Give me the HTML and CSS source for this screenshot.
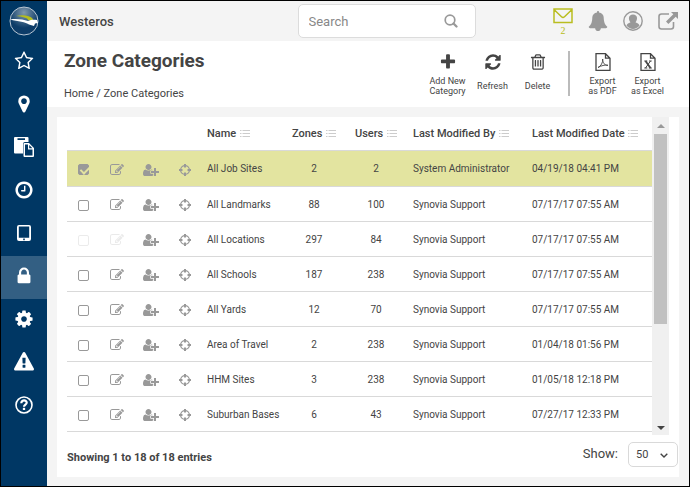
FILE: index.html
```html
<!DOCTYPE html>
<html lang="en">

<head>
  <meta charset="UTF-8" />
  <meta name="viewport" content="width=device-width, initial-scale=1" />
  <title>Zone Categories</title>
  <link rel="stylesheet" href="styles.css">
</head>

<body>
  <svg class="sprite" aria-hidden="true">
    <symbol id="i-star" viewBox="0 0 1792 1792"><path d="M1201 1004l306-297-422-62-189-382-189 382-422 62 306 297-73 421 378-199 377 199zm527-357q0 22-26 48l-363 354 86 500q1 7 1 20 0 50-41 50-19 0-40-12l-449-236-449 236q-22 12-40 12-21 0-31.500-14.500t-10.500-35.500q0-6 2-20l86-500-364-354q-25-27-25-48 0-37 56-46l502-73 225-455q19-41 49-41t49 41l225 455 502 73q56 9 56 46z"/></symbol>
    <symbol id="i-pin" viewBox="0 0 1792 1792"><path d="M1152 640q0-106-75-181t-181-75-181 75-75 181 75 181 181 75 181-75 75-181zm256 0q0 109-33 179l-364 774q-16 33-47.500 52t-67.500 19-67.500-19-46.500-52l-365-774q-33-70-33-179 0-212 150-362t362-150 362 150 150 362z"/></symbol>
    <symbol id="i-paste" viewBox="0 0 20 20"><path fill-rule="evenodd" d="M1 0h12.500q1 0 1 1v4h-3.500q-2 0-2 2v9.500h-8q-1 0-1-1v-14.500q0-1 1-1zM3.500 1.300v1.700h7.500v-1.700z"/><path fill-rule="evenodd" d="M10.500 6h4.500l5 5v8q0 1-1 1h-8.500q-1 0-1-1v-12q0-1 1-1zM11 7.500v11h7.500v-6h-4.500v-5zM15.200 8v3.200h3.200z"/></symbol>
    <symbol id="i-clock" viewBox="0 0 1792 1792"><path d="M1024 544v448q0 14-9 23t-23 9h-320q-14 0-23-9t-9-23v-64q0-14 9-23t23-9h224v-352q0-14 9-23t23-9h64q14 0 23 9t9 23zm416 352q0-148-73-273t-198-198-273-73-273 73-198 198-73 273 73 273 198 198 273 73 273-73 198-198 73-273zm224 0q0 209-103 385.500t-279.500 279.500-385.500 103-385.500-103-279.500-279.500-103-385.500 103-385.500 279.500-279.500 385.500-103 385.500 103 279.500 279.500 103 385.500z"/></symbol>
    <symbol id="i-tablet" viewBox="0 0 20 20"><path fill-rule="evenodd" d="M5 2h10q2 0 2 2v12q0 2-2 2h-10q-2 0-2-2v-12q0-2 2-2zM4.800 3.500v11.200h10.400v-11.200zM10 15.500a.9.9 0 1 0 .01 0z"/></symbol>
    <symbol id="i-lock" viewBox="0 0 1792 1792"><path d="M640 768h512v-192q0-106-75-181t-181-75-181 75-75 181v192zm832 96v576q0 40-28 68t-68 28h-960q-40 0-68-28t-28-68v-576q0-40 28-68t68-28h32v-192q0-184 132-316t316-132 316 132 132 316v192h32q40 0 68 28t28 68z"/></symbol>
    <symbol id="i-gear" viewBox="0 0 1792 1792"><path d="M1152 896q0-106-75-181t-181-75-181 75-75 181 75 181 181 75 181-75 75-181zm512-109v222q0 12-8 23t-20 13l-185 28q-19 54-39 91 35 50 107 138 10 12 10 25t-9 23q-27 37-99 108t-94 71q-12 0-26-9l-138-108q-44 23-91 38-16 136-29 186-7 28-36 28h-222q-14 0-24.500-8.500t-11.500-21.500l-28-184q-49-16-90-37l-141 107q-10 9-25 9-14 0-25-11-126-114-165-168-7-10-7-23 0-12 8-23 15-21 51-66.500t54-70.500q-27-50-41-99l-183-27q-13-2-21-12.500t-8-23.500v-222q0-12 8-23t19-13l186-28q14-46 39-92-40-57-107-138-10-12-10-24 0-10 9-23 26-36 98.500-107.500t94.500-71.500q13 0 26 10l138 107q44-23 91-38 16-136 29-186 7-28 36-28h222q14 0 24.500 8.500t11.500 21.500l28 184q49 16 90 37l142-107q9-9 24-9 13 0 25 10 129 119 165 170 7 8 7 22 0 12-8 23-15 21-51 66.500t-54 70.500q26 50 41 98l183 28q13 2 21 12.500t8 23.500z"/></symbol>
    <symbol id="i-warning" viewBox="0 0 1792 1792"><path d="M1024 1375v-190q0-14-9.500-23.500t-22.500-9.500h-192q-13 0-22.500 9.500t-9.500 23.500v190q0 14 9.500 23.500t22.500 9.500h192q13 0 22.500-9.500t9.500-23.500zm-2-374l18-459q0-12-10-19-13-11-24-11h-220q-11 0-24 11-10 7-10 21l17 457q0 10 10 16.500t24 6.500h185q14 0 23.500-6.500t10.500-16.500zm-14-934l768 1408q35 63-2 126-17 29-46.500 46t-63.500 17h-1536q-34 0-63.500-17t-46.500-46q-37-63-2-126l768-1408q17-31 47-49t65-18 65 18 47 49z"/></symbol>
    <symbol id="i-help" viewBox="0 0 20 20"><g fill="none" stroke="currentColor"><circle cx="10" cy="10" r="8" stroke-width="1.600"/><path d="M7.300 8.200c0-3.800 5.600-3.400 5.400-.4-.1 1.800-2.700 1.900-2.700 4" stroke-width="2.200"/><path d="M10 12.800v2.200" stroke-width="2.300"/></g></symbol>
    <symbol id="i-search" viewBox="0 0 14 14"><g fill="none" stroke="currentColor"><circle cx="6" cy="6" r="4.800" stroke-width="1.700"/><path d="M9.500 9.500l3 3" stroke-width="2.300" stroke-linecap="round"/></g></symbol>
    <symbol id="i-mail" viewBox="0 0 20 16"><path d="M1 1h18v13.500h-18zM1 1.500l7.500 7.200q1.500 1.300 3 0l7.500-7.200" fill="none" stroke="currentColor" stroke-width="1.500"/></symbol>
    <symbol id="i-bell" viewBox="0 0 1792 1792"><path d="M1728 1408q0 52-38 90t-90 38h-448q0 106-75 181t-181 75-181-75-75-181h-448q-52 0-90-38t-38-90q50-42 91-88t85-119.500 74.500-158.500 50-206 19.500-260q0-152 117-282.500t307-158.500q-8-19-8-39 0-40 28-68t68-28 68 28 28 68q0 20-8 39 190 28 307 158.500t117 282.500q0 139 19.500 260t50 206 74.500 158.500 85 119.500 91 88z"/></symbol>
    <symbol id="i-user" viewBox="0 0 20 20"><circle cx="10" cy="10" r="9.200" fill="none" stroke="currentColor" stroke-width="1.400"/><path d="M10 3.500c5 0 4.800 5.500 2.500 7.800 1 .7 3 .7 4 3.200-3.500 4.600-9.500 4.600-13 0 1-2.500 3-2.500 4-3.200-2.300-2.300-2.500-7.800 2.500-7.800z"/></symbol>
    <symbol id="i-share" viewBox="0 0 20 18"><path d="M11 2h-7.500q-2.500 0-2.500 2.500v10q0 2.500 2.500 2.500h9.500q2.500 0 2.500-2.500v-4.500" fill="none" stroke="currentColor" stroke-width="1.600"/><path d="M13 0h7v7l-2.300-2.300-7.300 7.300-2.400-2.400 7.300-7.300z"/></symbol>
    <symbol id="i-plus" viewBox="0 0 1792 1792"><path d="M1600 736v192q0 40-28 68t-68 28h-416v416q0 40-28 68t-68 28h-192q-40 0-68-28t-28-68v-416h-416q-40 0-68-28t-28-68v-192q0-40 28-68t68-28h416v-416q0-40 28-68t68-28h192q40 0 68 28t28 68v416h416q40 0 68 28t28 68z"/></symbol>
    <symbol id="i-refresh" viewBox="0 0 1792 1792"><path d="M1639 1056q0 5-1 7-64 268-268 434.500t-478 166.500q-146 0-282.500-55t-243.500-157l-129 129q-19 19-45 19t-45-19-19-45v-448q0-26 19-45t45-19h448q26 0 45 19t19 45-19 45l-137 137q71 66 161 102t187 36q134 0 250-65t186-179q11-17 53-117 8-23 30-23h192q13 0 22.500 9.500t9.500 22.500zm25-800v448q0 26-19 45t-45 19h-448q-26 0-45-19t-19-45 19-45l138-138q-148-137-349-137-134 0-250 65t-186 179q-11 17-53 117-8 23-30 23h-199q-13 0-22.500-9.500t-9.500-22.500v-7q65-268 270-434.500t480-166.500q146 0 284 55.500t245 156.500l130-129q19-19 45-19t45 19 19 45z"/></symbol>
    <symbol id="i-trash" viewBox="0 0 1792 1792"><path d="M704 736v576q0 14-9 23t-23 9h-64q-14 0-23-9t-9-23v-576q0-14 9-23t23-9h64q14 0 23 9t9 23zm256 0v576q0 14-9 23t-23 9h-64q-14 0-23-9t-9-23v-576q0-14 9-23t23-9h64q14 0 23 9t9 23zm256 0v576q0 14-9 23t-23 9h-64q-14 0-23-9t-9-23v-576q0-14 9-23t23-9h64q14 0 23 9t9 23zm128 724v-948h-896v948q0 22 7 40.500t14.500 27 10.500 8.500h832q3 0 10.500-8.500t14.500-27 7-40.500zm-672-1076h448l-48-117q-7-9-17-11h-317q-10 2-17 11zm928 32v64q0 14-9 23t-23 9h-96v948q0 83-47 143.500t-113 60.500h-832q-66 0-113-58.500t-47-141.500v-952h-96q-14 0-23-9t-9-23v-64q0-14 9-23t23-9h309l70-167q15-37 54-63t79-26h320q40 0 79 26t54 63l70 167h309q14 0 23 9t9 23z"/></symbol>
    <symbol id="i-pdf" viewBox="0 0 16 18"><g fill="none" stroke="currentColor"><path d="M1 .7h9.500l4.500 4.500v12.100h-14zM10.500 .7v4.500h4.500" stroke-width="1.300"/><path d="M3 14.500c3-1.300 5-5 4.700-8.500 0 4 2 6.500 5.300 6.300-3-.8-7 .5-10 2.200z" stroke-width=".9"/></g></symbol>
    <symbol id="i-excel" viewBox="0 0 16 18"><g fill="none" stroke="currentColor"><path d="M1 .7h9.500l4.500 4.500v12.100h-14zM10.500 .7v4.500h4.500" stroke-width="1.300"/><path d="M5.500 8l5 7" stroke-width="1.800"/><path d="M10.500 8l-5 7M4.300 8h3M9 8h2.700M4.300 15h3M8.800 15h3" stroke-width="1"/></g></symbol>
    <symbol id="i-list" viewBox="0 0 10 8"><path d="M0 1.500h1.500M0 4.500h1.500M0 7.500h1.500M2.500 1.500h7.500M2.500 4.500h7.500M2.500 7.500h7.500" fill="none" stroke="currentColor"/></symbol>
    <symbol id="i-edit" viewBox="0 0 1792 1792"><path d="M888 1184l116-116-152-152-116 116v56h96v96h56zm440-720q-16-16-33 1l-350 350q-17 17-1 33t33-1l350-350q17-17 1-33zm80 594v190q0 119-84.500 203.500t-203.500 84.500h-832q-119 0-203.500-84.500t-84.500-203.500v-832q0-119 84.500-203.500t203.500-84.500h832q63 0 117 25 15 7 18 23 3 17-9 29l-49 49q-14 14-32 8-23-6-45-6h-832q-66 0-113 47t-47 113v832q0 66 47 113t113 47h832q66 0 113-47t47-113v-126q0-13 9-22l64-64q15-15 35-7t20 29zm-96-738l288 288-672 672h-288v-288zm444 132l-92 92-288-288 92-92q28-28 68-28t68 28l152 152q28 28 28 68t-28 68z"/></symbol>
    <symbol id="i-user-plus" viewBox="0 0 2048 1792"><path d="M704 896q-159 0-271.500-112.500t-112.500-271.500 112.500-271.500 271.500-112.500 271.500 112.500 112.500 271.500-112.500 271.500-271.500 112.500zm960 128h352q13 0 22.500 9.500t9.500 22.500v192q0 13-9.500 22.500t-22.500 9.500h-352v352q0 13-9.500 22.500t-22.500 9.500h-192q-13 0-22.500-9.500t-9.500-22.500v-352h-352q-13 0-22.500-9.500t-9.500-22.500v-192q0-13 9.500-22.500t22.500-9.500h352v-352q0-13 9.500-22.500t22.500-9.500h192q13 0 22.500 9.500t9.500 22.500v352zm-736 224q0 52 38 90t90 38h256v238q-68 50-171 50h-874q-121 0-194-69t-73-190q0-53 3.500-103.500t14-109 26.500-108.500 43-97.500 62-81 85.500-53.500 111.500-20q19 0 39 17 79 61 154.500 91.500t164.500 30.500 164.500-30.500 154.500-91.500q20-17 39-17 132 0 217 96h-223q-52 0-90 38t-38 90v192z"/></symbol>
    <symbol id="i-target" viewBox="0 0 14 14"><g fill="none" stroke="currentColor"><circle cx="7" cy="7" r="4.400" stroke-width="1.300"/><path d="M7 1v3.500M7 9.500v3.500M1 7h3.500M9.500 7h3.500" stroke-width="2"/></g></symbol>
    <symbol id="i-chevron" viewBox="0 0 8 5"><path d="M.7 .7l3.300 3.300 3.300-3.300" fill="none" stroke="currentColor" stroke-width="1.400"/></symbol>
  </svg>

  <div class="app">
    <nav class="sidebar">
      <a class="logo" href="#" aria-label="Dashboard">
        <svg viewBox="0 0 30 30">
          <defs>
            <radialGradient id="globe" cx=".5" cy=".2" r=".55">
              <stop offset="0" stop-color="#8199ae" />
              <stop offset="1" stop-color="#0d3c68" />
            </radialGradient>
          </defs>
          <circle cx="15" cy="15" r="14" fill="url(#globe)" stroke="#b9c6d3" />
          <path d="M7 10c7-1.500 14-.5 17 3l-1 2-4-1c0-2-6-3.500-12-4z" fill="#b5bd1e" />
          <path d="M1 13.500c7-1 13 0 18 1.500 3-1.500 6-1.500 9-1l1 3-3 .5-1 2.500-5-1.500c-3-2.500-11-3-19-5z" fill="#fff" />
        </svg>
      </a>
      <a class="nav-item" href="#" aria-label="Favorites"><svg><use href="#i-star" /></svg></a>
      <a class="nav-item" href="#" aria-label="Map"><svg><use href="#i-pin" /></svg></a>
      <a class="nav-item" href="#" aria-label="Reports"><svg><use href="#i-paste" /></svg></a>
      <a class="nav-item" href="#" aria-label="Time"><svg><use href="#i-clock" /></svg></a>
      <a class="nav-item" href="#" aria-label="Devices"><svg><use href="#i-tablet" /></svg></a>
      <a class="nav-item active" href="#" aria-label="Admin"><svg><use href="#i-lock" /></svg></a>
      <a class="nav-item" href="#" aria-label="Settings"><svg><use href="#i-gear" /></svg></a>
      <a class="nav-item" href="#" aria-label="Alerts"><svg><use href="#i-warning" /></svg></a>
      <a class="nav-item" href="#" aria-label="Help"><svg><use href="#i-help" /></svg></a>
    </nav>

    <div class="main">
      <header class="topbar">
        <span class="company">Westeros</span>
        <div class="search">
          <input type="text" placeholder="Search" aria-label="Search" />
          <svg><use href="#i-search" /></svg>
        </div>
        <div class="top-icons">
          <a class="mail" href="#" aria-label="Messages"><svg><use href="#i-mail" /></svg><span>2</span></a>
          <a href="#" aria-label="Notifications"><svg><use href="#i-bell" /></svg></a>
          <a href="#" aria-label="Account"><svg><use href="#i-user" /></svg></a>
          <a href="#" aria-label="Log out"><svg><use href="#i-share" /></svg></a>
        </div>
      </header>

      <div class="page-head">
        <div>
          <h1>Zone Categories</h1>
          <div class="breadcrumb"><a href="#">Home</a> / <a href="#">Zone Categories</a></div>
        </div>
        <div class="toolbar">
          <button type="button"><svg><use href="#i-plus" /></svg><span>Add New<br>Category</span></button>
          <button type="button"><svg><use href="#i-refresh" /></svg><span>Refresh</span></button>
          <button type="button"><svg><use href="#i-trash" /></svg><span>Delete</span></button>
          <div class="divider"></div>
          <button type="button"><svg><use href="#i-pdf" /></svg><span>Export<br>as PDF</span></button>
          <button type="button"><svg><use href="#i-excel" /></svg><span>Export<br>as Excel</span></button>
        </div>
      </div>

      <div class="panel">
        <div class="grid-wrap">
          <table>
            <colgroup>
              <col class="c-check"><col class="c-edit"><col class="c-user"><col class="c-target">
              <col class="c-name"><col class="c-zones"><col class="c-users"><col class="c-by"><col>
            </colgroup>
            <thead>
              <tr>
                <th></th><th></th><th></th><th></th>
                <th>Name <svg><use href="#i-list" /></svg></th>
                <th class="num">Zones <svg><use href="#i-list" /></svg></th>
                <th class="num">Users <svg><use href="#i-list" /></svg></th>
                <th>Last Modified By <svg><use href="#i-list" /></svg></th>
                <th>Last Modified Date <svg><use href="#i-list" /></svg></th>
              </tr>
            </thead>
            <tbody id="rows"></tbody>
          </table>
          <div class="scrollbar"><i class="up"></i><div class="thumb"></div><i class="down"></i></div>
        </div>
        <div class="panel-foot">
          <strong>Showing 1 to 18 of 18 entries</strong>
          <div class="page-size">
            <label for="pageSize">Show:</label>
            <div class="select">
              <select id="pageSize">
                <option>50</option>
                <option>100</option>
              </select>
              <svg><use href="#i-chevron" /></svg>
            </div>
          </div>
        </div>
      </div>
    </div>
  </div>

  <script>
    const rows = [
      ['All Job Sites', 2, 2, 'System Administrator', '04/19/18 04:41 PM', 'selected'],
      ['All Landmarks', 88, 100, 'Synovia Support', '07/17/17 07:55 AM'],
      ['All Locations', 297, 84, 'Synovia Support', '07/17/17 07:55 AM', 'locked'],
      ['All Schools', 187, 238, 'Synovia Support', '07/17/17 07:55 AM'],
      ['All Yards', 12, 70, 'Synovia Support', '07/17/17 07:55 AM'],
      ['Area of Travel', 2, 238, 'Synovia Support', '01/04/18 01:56 PM'],
      ['HHM Sites', 3, 238, 'Synovia Support', '01/05/18 12:18 PM'],
      ['Suburban Bases', 6, 43, 'Synovia Support', '07/27/17 12:33 PM']
    ];

    document.getElementById('rows').innerHTML = rows.map(([name, zones, users, by, date, state = '']) => {
      const off = state === 'locked' ? 'disabled' : '';
      return `
        <tr class="${state}">
          <td class="act"><input type="checkbox" aria-label="Select ${name}" ${state === 'selected' ? 'checked' : ''} ${off} /></td>
          <td class="act"><button type="button" aria-label="Edit" ${off}><svg><use href="#i-edit" /></svg></button></td>
          <td class="act"><button type="button" aria-label="Add user"><svg class="wide"><use href="#i-user-plus" /></svg></button></td>
          <td class="act"><button type="button" aria-label="Locate"><svg><use href="#i-target" /></svg></button></td>
          <td>${name}</td>
          <td class="num">${zones}</td>
          <td class="num">${users}</td>
          <td>${by}</td>
          <td>${date}</td>
        </tr>`;
    }).join('');
  </script>
</body>

</html>
```
FILE: styles.css
```css
* {
  box-sizing: border-box;
}

body {
  margin: 0;
  font-family: Roboto, "Liberation Sans", sans-serif;
  font-size: 10px;
  color: #444;
  background: #f4f4f4;
}

a {
  color: inherit;
  text-decoration: none;
}

svg {
  display: block;
  fill: currentColor;
}

.sprite {
  display: none;
}

button {
  padding: 0;
  border: none;
  background: none;
  color: inherit;
  font: inherit;
  cursor: pointer;
}

.app {
  display: flex;
  min-height: 100vh;
  border: 1px solid #000;
}

/* sidebar */
.sidebar {
  flex: none;
  width: 46px;
  background: #003764;
  color: #fff;
}

.logo {
  display: flex;
  align-items: center;
  justify-content: center;
  height: 40px;
}

.logo svg {
  width: 30px;
  height: 30px;
}

.nav-item {
  display: flex;
  align-items: center;
  justify-content: center;
  height: 43px;
  padding-bottom: 4px;
}

.nav-item svg {
  width: 20px;
  height: 20px;
}

.nav-item.active {
  background: #335f83;
}

/* top bar */
.main {
  flex: 1;
  min-width: 0;
  display: flex;
  flex-direction: column;
}

.topbar {
  display: flex;
  align-items: center;
  justify-content: space-between;
  height: 40px;
  padding: 0 11px 0 12px;
}

.company {
  width: 161px;
  font-size: 13px;
  font-weight: 500;
}

.search {
  position: relative;
  width: 178px;
}

.search input {
  width: 100%;
  height: 34px;
  padding: 0 36px 0 10px;
  border: 1px solid #dcdcdc;
  border-radius: 5px;
  font: 13px Roboto, "Liberation Sans", sans-serif;
}

.search input::placeholder {
  color: #888;
}

.search svg {
  position: absolute;
  right: 18px;
  top: 10px;
  width: 14px;
  height: 14px;
  color: #999;
}

.top-icons {
  display: flex;
  align-items: center;
  gap: 15px;
  color: #999;
}

.top-icons svg {
  width: 20px;
  height: 20px;
}

.top-icons .mail {
  color: #b9bd20;
  font: 10px/10px "Liberation Serif", serif;
  text-align: center;
}

.top-icons .mail svg {
  height: 16px;
  margin: 2px 0;
}

.top-icons .mail span {
  display: block;
}

/* title and actions */
.page-head {
  display: flex;
  justify-content: space-between;
  height: 66px;
  padding: 8px 20px 0 17px;
  background: #fff;
}

h1 {
  margin: 0 0 14px;
  font-size: 19px;
  line-height: 24px;
  font-weight: 700;
}

.breadcrumb {
  font-size: 11px;
  line-height: 14px;
}

.toolbar {
  display: flex;
  align-items: flex-start;
  gap: 2px;
}

.toolbar button {
  display: flex;
  flex-direction: column;
  align-items: center;
  width: 43px;
  padding-top: 4px;
  font-size: 9px;
  line-height: 10px;
}

.toolbar svg {
  width: 18px;
  height: 18px;
}

.toolbar span {
  display: flex;
  flex-direction: column;
  justify-content: center;
  height: 22px;
  margin-top: 4px;
}

.toolbar .divider {
  width: 2px;
  height: 45px;
  margin: 2px 9px 0 7px;
  background: #bbb;
}

/* zones grid */
.panel {
  flex: 1;
  margin: 10px 10px 9px;
  padding-left: 10px;
  background: #fff;
}

.grid-wrap {
  display: flex;
  margin-right: 10px;
}

table {
  flex: 1;
  table-layout: fixed;
  width: 100%;
  border-spacing: 0;
}

.c-check,
.c-edit {
  width: 33px;
}

.c-user {
  width: 36px;
}

.c-target {
  width: 32px;
}

.c-name {
  width: 82px;
}

.c-zones,
.c-users {
  width: 62px;
}

.c-by {
  width: 119px;
}

th,
td {
  height: 35px;
  padding: 0 0 0 6px;
  border-bottom: 1px solid #d9d9d9;
  text-align: left;
  white-space: nowrap;
}

th {
  height: 34px;
  font-size: 11px;
  font-weight: 500;
}

th svg {
  display: inline-block;
  width: 10px;
  height: 8px;
  margin-left: 1px;
  color: #ccc;
}

.num {
  padding: 0;
  text-align: center;
}

.act {
  padding: 2px 0 0;
  color: #999;
}

.act button,
.act input {
  display: block;
  margin: 0 auto;
}

.act svg {
  width: 14px;
  height: 14px;
}

.act svg.wide {
  width: 16px;
  height: 14px;
}

.act input {
  appearance: none;
  position: relative;
  width: 11px;
  height: 11px;
  border: 1px solid #999;
  border-radius: 2px;
}

.act input:checked {
  background: #999;
}

.act input:checked::after {
  content: "";
  position: absolute;
  left: 3px;
  top: 0;
  width: 4px;
  height: 7px;
  border: solid #e3e4a0;
  border-width: 0 2px 2px 0;
  transform: rotate(45deg);
}

.act :disabled {
  opacity: 0.2;
}

.selected td {
  height: 36px;
  background: #e3e4a0;
}

.scrollbar {
  display: flex;
  flex-direction: column;
  align-items: center;
  flex: none;
  width: 17px;
  margin-bottom: -3px;
  padding: 7px 0 5px;
  background: #f0f0f0;
}

.scrollbar i {
  border: 4px solid transparent;
}

.scrollbar .up {
  border-top: 0;
  border-bottom-color: #999;
}

.scrollbar .down {
  margin-top: auto;
  border-bottom: 0;
  border-top-color: #444;
}

.thumb {
  width: 13px;
  height: 62%;
  margin-top: 6px;
  margin-bottom: auto;
  background: #c1c1c1;
}

.panel-foot {
  display: flex;
  justify-content: space-between;
  padding: 10px 1px 0 0;
}

.panel-foot strong {
  padding-top: 9px;
  font-size: 11px;
  line-height: 14px;
}

.page-size {
  display: flex;
  gap: 10px;
}

.page-size label {
  font-size: 13px;
  line-height: 24px;
}

.select {
  position: relative;
}

.select select {
  appearance: none;
  width: 50px;
  height: 25px;
  padding: 0 0 0 7px;
  border: 1px solid #d9d9d9;
  border-radius: 5px;
  background: #fff;
  color: #444;
  font: 11px Roboto, "Liberation Sans", sans-serif;
}

.select svg {
  position: absolute;
  right: 10px;
  top: 11px;
  width: 8px;
  height: 5px;
  pointer-events: none;
}
```
